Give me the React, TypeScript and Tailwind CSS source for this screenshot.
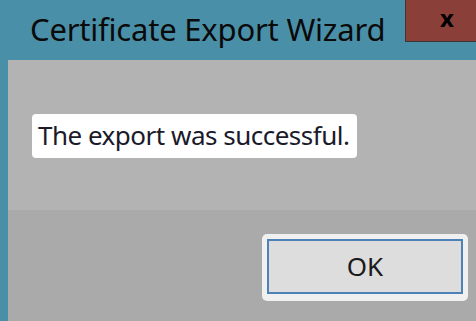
export default function App() {
  return (
    <div className="w-[476px] h-[321px] bg-[#4a8fa8] flex flex-col overflow-hidden font-['Noto_Sans',sans-serif]">
      {/* title bar */}
      <div className="relative h-[60px] shrink-0 flex items-center pl-[30px]">
        <span className="text-[31px] leading-none text-[#0a0a0a] -mt-[2px] tracking-[-0.2px]">
          Certificate Export Wizard
        </span>
        <div className="absolute right-0 top-0 w-[71px] h-[42px] bg-[#8b3f39] border-l border-b border-[#3b3535] flex items-center justify-center">
          <span className="text-[24px] font-bold leading-none text-black -mt-[5px] ml-[12px]">x</span>
        </div>
      </div>

      {/* body */}
      <div className="ml-[8px] flex-1 flex flex-col">
        <div className="h-[150px] bg-[#b3b3b3] pt-[54px] pl-[24px]">
          <div className="inline-flex items-center w-[325px] h-[44px] px-[6px] bg-white rounded-[4px]">
            <span className="text-[26px] tracking-[-0.5px] text-[#1a1a2a] leading-none -mt-[2px]">The export was successful.</span>
          </div>
        </div>
        <div className="flex-1 bg-[#aaaaaa] flex justify-end items-start pt-[24px] pr-[8px]">
          <div className="w-[206px] h-[67px] bg-[#f0f0f0] rounded-[5px] p-[5px] pb-[7px]">
            <div className="w-full h-full bg-[#dddddd] border-2 border-[#4d82b8] flex items-center justify-center">
              <span className="text-[26px] leading-none text-[#1a1a1a] -mt-[2px]">OK</span>
            </div>
          </div>
        </div>
      </div>
    </div>
  );
}
